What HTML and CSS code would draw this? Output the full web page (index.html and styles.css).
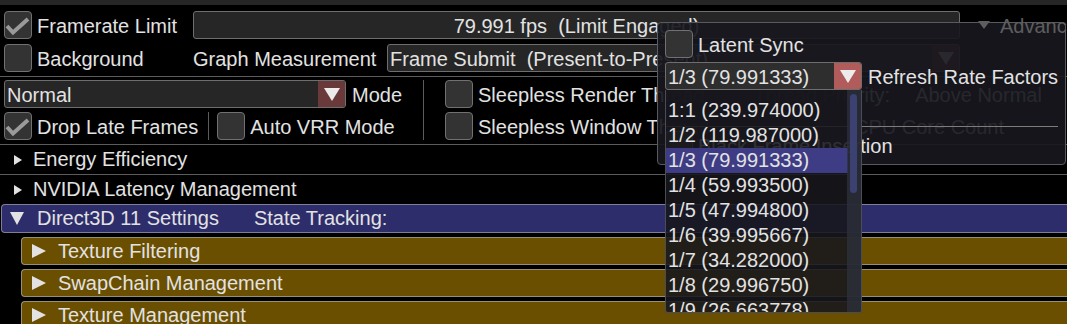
FILE: index.html
```html
<!DOCTYPE html>
<html>
<head>
    <meta charset="utf-8">
    <title>Framerate Limiter</title>
    <link rel="stylesheet" href="styles.css">
</head>
<body>
    <div class="titlebar"></div>
    <div class="window">
        <!-- framerate limit -->
        <div class="row r1">
            <div class="col1">
                <span class="cb"><svg width="28" height="28" viewBox="0 0 28 28"><path d="M3 15 L9 21.5 L24 8" class="check"/></svg></span>
                <span class="txt">Framerate Limit</span>
            </div>
            <div class="slider">79.991 fps  (Limit Engaged)</div>
            <div class="adv"><svg width="12" height="8" viewBox="0 0 12 8"><polygon points="0,0 12,0 6,8"/></svg><span class="txt">Advanced</span></div>
        </div>
        <div class="row r2">
            <div class="col1">
                <span class="cb"></span>
                <span class="txt">Background</span>
            </div>
            <div class="lbl-graph txt">Graph Measurement</div>
            <div class="combo graph">
                <span class="combo-text">Frame Submit  (Present-to-Present)</span>
                <span class="arrow"><svg width="16" height="13" viewBox="0 0 16 13"><polygon points="0,0 16,0 8,13"/></svg></span>
            </div>
        </div>
        <div class="hsep sep-a"></div>

        <div class="split">
            <div class="left">
                <div class="row pad4">
                    <div class="combo normal">
                        <span class="combo-text">Normal</span>
                        <span class="arrow"><svg width="16" height="13" viewBox="0 0 16 13"><polygon points="0,0 16,0 8,13"/></svg></span>
                    </div>
                    <span class="after-combo txt">Mode</span>
                </div>
                <div class="row pad4">
                    <span class="cb"><svg width="28" height="28" viewBox="0 0 28 28"><path d="M3 15 L9 21.5 L24 8" class="check"/></svg></span>
                    <span class="lbl txt">Drop Late Frames</span>
                    <span class="vsep-s"></span>
                    <span class="cb"></span>
                    <span class="lbl txt">Auto VRR Mode</span>
                </div>
            </div>
            <div class="vsep"></div>
            <div class="right">
                <div class="row">
                    <span class="cb"></span>
                    <span class="lbl txt">Sleepless Render Thread</span>
                    <span class="prio txt">Thread Priority:</span>
                    <span class="prio-val txt">Above Normal</span>
                </div>
                <div class="row">
                    <span class="cb"></span>
                    <span class="lbl txt">Sleepless Window Thread</span>
                    <span class="cores txt">CPU Core Count</span>
                </div>
            </div>
        </div>
        <div class="hsep sep-b"></div>

        <div class="tree">
            <svg width="8" height="10" viewBox="0 0 8 10"><polygon points="0,0 8,5 0,10"/></svg>
            <span>Energy Efficiency</span>
        </div>
        <div class="hsep"></div>
        <div class="tree">
            <svg width="8" height="10" viewBox="0 0 8 10"><polygon points="0,0 8,5 0,10"/></svg>
            <span>NVIDIA Latency Management</span>
        </div>

        <div class="hdr d3d">
            <svg width="14" height="13" viewBox="0 0 14 13"><polygon points="0,0 14,0 7,13"/></svg>
            <span class="hdr-text">Direct3D 11 Settings</span>
            <span class="state">State Tracking:</span>
        </div>
        <div class="hdr gold">
            <svg width="14" height="14" viewBox="0 0 14 14"><polygon points="0,0 14,7 0,14"/></svg>
            <span class="hdr-text">Texture Filtering</span>
        </div>
        <div class="hdr gold">
            <svg width="14" height="14" viewBox="0 0 14 14"><polygon points="0,0 14,7 0,14"/></svg>
            <span class="hdr-text">SwapChain Management</span>
        </div>
        <div class="hdr gold">
            <svg width="14" height="14" viewBox="0 0 14 14"><polygon points="0,0 14,7 0,14"/></svg>
            <span class="hdr-text">Texture Management</span>
        </div>
    </div>

    <!-- advanced popup -->
    <div class="popup">
        <div class="row">
            <span class="cb"></span>
            <span class="lbl txt">Latent Sync</span>
        </div>
        <div class="row">
            <div class="combo rr">
                <span class="combo-text">1/3 (79.991333)</span>
                <span class="arrow hot"><svg width="16" height="13" viewBox="0 0 16 13"><polygon points="0,0 16,0 8,13"/></svg></span>
            </div>
            <span class="after-combo txt">Refresh Rate Factors</span>
        </div>
        <div class="row"></div>
        <div class="psep"></div>
        <div class="row">
            <span class="cb"></span>
            <span class="lbl txt">Black Frame Insertion</span>
        </div>
    </div>

    <div class="combo-list">
        <div class="item">1:1 (239.974000)</div>
        <div class="item">1/2 (119.987000)</div>
        <div class="item sel">1/3 (79.991333)</div>
        <div class="item">1/4 (59.993500)</div>
        <div class="item">1/5 (47.994800)</div>
        <div class="item">1/6 (39.995667)</div>
        <div class="item">1/7 (34.282000)</div>
        <div class="item">1/8 (29.996750)</div>
        <div class="item">1/9 (26.663778)</div>
        <div class="sb"><div class="grab"></div></div>
    </div>
</body>
</html>
```

FILE: styles.css
```css
body {
    margin: 0;
    width: 1067px;
    height: 324px;
    overflow: hidden;
    position: relative;
    background: #000;
    color: #e2e2e2;
    font-family: "Liberation Sans", Arial, sans-serif;
    font-size: 20px;
}
svg polygon {
    fill: currentColor;
}
.check {
    fill: none;
    stroke: #9a9a9a;
    stroke-width: 4;
}
.titlebar {
    height: 5px;
    background: #262626;
}
.window {
    padding-top: 6px;
}
.row {
    display: flex;
    align-items: center;
    height: 28px;
    white-space: pre;
}
.row > * {
    flex: none;
}
.txt {
    padding-top: 2px;
}
.r1 {
    margin-bottom: 5px;
}
.pad4 {
    padding-left: 4px;
}
.col1 {
    width: 193px;
    box-sizing: border-box;
    padding-left: 4px;
    display: flex;
    align-items: center;
    gap: 5px;
}
.cb {
    width: 28px;
    height: 28px;
    flex: none;
    box-sizing: border-box;
    border: 1px solid #717171;
    border-radius: 4px;
    background: #333;
    position: relative;
}
.cb svg {
    position: absolute;
    left: -1px;
    top: -1px;
}
.lbl {
    margin-left: 5px;
}
.slider {
    width: 767px;
    height: 28px;
    box-sizing: border-box;
    border: 1px solid #6e6e6e;
    border-radius: 3px;
    background: #262626;
    text-align: center;
    line-height: 28px;
    overflow: hidden;
}
.adv {
    margin-left: 18px;
    color: #5e5e5e;
    display: flex;
    align-items: center;
    gap: 10px;
    position: relative;
    z-index: 2;
}
.lbl-graph {
    width: 194px;
}
.combo {
    display: flex;
    height: 28px;
    box-sizing: border-box;
    border: 1px solid #6e6e6e;
    border-radius: 3px;
    background: #262626;
    overflow: hidden;
}
.combo-text {
    flex: 1;
    padding-left: 2px;
    line-height: 28px;
}
.arrow {
    width: 27px;
    background: #6a3a3a;
    color: #ececec;
    display: flex;
    align-items: center;
    justify-content: center;
}
.arrow.hot {
    background: #b25b5b;
}
.graph {
    width: 573px;
}
.normal {
    width: 342px;
}
.after-combo {
    margin-left: 6px;
}
.hsep {
    height: 1px;
    background: #5c5c5c;
}
.sep-a {
    margin: 4px 0 3px;
}
.sep-b {
    margin-top: 4px;
}
.split {
    display: flex;
}
.left {
    width: 423px;
    display: flex;
    flex-direction: column;
    gap: 4px;
}
.vsep {
    width: 1px;
    background: #5c5c5c;
}
.vsep-s {
    width: 1px;
    height: 28px;
    background: #5c5c5c;
    margin: 0 8px 0 10px;
}
.right {
    flex: 1;
    padding-left: 21px;
    display: flex;
    flex-direction: column;
    gap: 4px;
}
.prio {
    margin-left: 49px;
}
.prio-val {
    margin-left: 25px;
}
.cores {
    margin-left: 144px;
}
.tree {
    height: 29px;
    display: flex;
    align-items: center;
    padding-left: 14px;
    gap: 11px;
}
.hdr {
    height: 28px;
    box-sizing: border-box;
    border: 1px solid #8a8a8c;
    border-right: none;
    border-radius: 4px 0 0 4px;
    display: flex;
    align-items: center;
    white-space: pre;
}
.d3d {
    height: 29px;
    margin-left: 1px;
    padding-left: 8px;
    background: #2e2d6b;
    border-color: #7e7e96;
}
.d3d .hdr-text {
    margin-left: 13px;
}
.state {
    margin-left: 35px;
}
.gold {
    margin: 4px 0 0 21px;
    padding-left: 10px;
    background: #6a4f00;
    border-color: #95907c;
}
.gold .hdr-text {
    margin-left: 12px;
}
.popup {
    position: absolute;
    left: 657px;
    top: 22px;
    width: 409px;
    box-sizing: border-box;
    padding: 7px 7px 5px;
    border: 1px solid #595962;
    border-radius: 4px;
    background: rgba(23, 23, 29, 0.92);
    display: flex;
    flex-direction: column;
    gap: 4px;
}
.rr {
    width: 197px;
    background: #2e2e2e;
}
.psep {
    height: 1px;
    background: #7c7c7c;
}
.combo-list {
    position: absolute;
    left: 665px;
    top: 90px;
    width: 197px;
    height: 223px;
    box-sizing: border-box;
    padding-top: 8px;
    border: 1px solid #4c4c56;
    border-top: none;
    border-radius: 0 0 3px 3px;
    background: rgba(23, 23, 29, 0.88);
    overflow: hidden;
}
.item {
    width: 182px;
    height: 25px;
    line-height: 25px;
    padding-left: 2px;
    box-sizing: border-box;
    white-space: pre;
}
.item.sel {
    background: #3e3c84;
}
.sb {
    position: absolute;
    top: 0;
    right: 0;
    bottom: 0;
    width: 14px;
    background: rgba(46, 49, 60, 0.75);
}
.grab {
    position: absolute;
    left: 3px;
    top: 4px;
    width: 7px;
    height: 99px;
    border-radius: 4px;
    background: #3b4170;
}
```
